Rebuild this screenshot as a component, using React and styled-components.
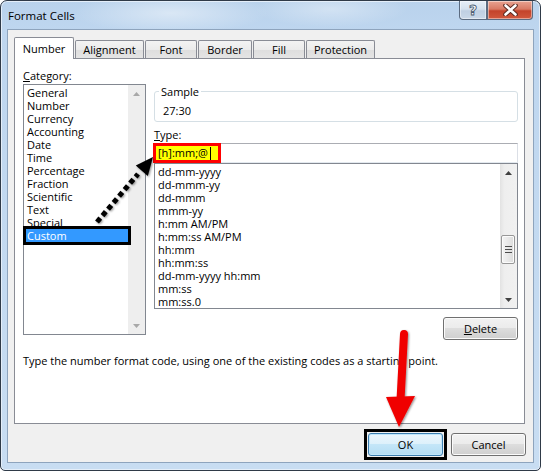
import React from 'react';
import styled, { createGlobalStyle } from 'styled-components';

const FONT = `"Open Sans", "Noto Sans", "Liberation Sans", sans-serif`;
const FS = 11;

const Global = createGlobalStyle`
  html, body { margin: 0; padding: 0; background: #fff; }
  body {
    width: 541px; height: 471px; overflow: hidden;
    font-family: ${FONT}; font-size: ${FS}px; color: #000;
  }
  * { box-sizing: border-box; }
`;

const Window = styled.div`
  position: relative;
  width: 541px;
  height: 471px;
  border: 1px solid #2f3a48;
  border-radius: 7px 7px 5px 5px;
  background:
    radial-gradient(ellipse 140px 30px at 170px 12px, rgba(255,255,255,0.45), rgba(255,255,255,0) 70%),
    radial-gradient(ellipse 110px 26px at 330px 8px, rgba(255,255,255,0.35), rgba(255,255,255,0) 70%),
    linear-gradient(180deg, #b9d2ec 0%, #bed6ef 30px, #c8ddf2 100%);
  box-shadow: inset 0 0 0 1px #e4eef9;
  padding: 0 6px 7px 6px;
  display: flex;
  flex-direction: column;
`;

const TitleBar = styled.div`
  height: 28px;
  display: flex;
  justify-content: space-between;
  align-items: flex-start;
`;

const Title = styled.div`
  padding: 7px 0 0 1px;
  line-height: 15px;
  font-size: 11.5px;
  color: #000;
`;

const Controls = styled.div`
  display: flex;
  margin-right: 1px;
`;

const CtrlButton = styled.div`
  width: ${p => p.$w}px;
  height: 19px;
  display: flex;
  align-items: center;
  justify-content: center;
  border: 1px solid #5b6b80;
  border-top: none;
  border-radius: ${p => p.$r};
  background: ${p => p.$close
    ? 'linear-gradient(180deg, #e8a392 0%, #d87a65 45%, #c4432b 55%, #d1583d 100%)'
    : 'linear-gradient(180deg, #e6eef7 0%, #d5e1ee 45%, #bfcfe2 55%, #cad8e8 100%)'};
  box-shadow: inset 0 0 0 1px rgba(255,255,255,0.45);
`;

const HelpGlyph = styled.span`
  font-family: "DejaVu Sans", sans-serif;
  font-weight: bold;
  font-size: 14px;
  line-height: 14px;
  color: #fff;
  -webkit-text-stroke: 0.9px #4c5d72;
`;

const Client = styled.div`
  flex: 1;
  background: #f0f0f0;
  border: 1px solid #8ea4bd;
  padding: 7px 8px 0 6px;
  display: flex;
  flex-direction: column;
`;

const TabStrip = styled.div`
  height: 22px;
  margin-bottom: -1px;
  display: flex;
  align-items: flex-end;
  gap: 1px;
`;

const Tab = styled.div`
  width: ${p => p.$w}px;
  height: ${p => (p.$active ? 22 : 19)}px;
  border: 1px solid #898c95;
  border-bottom: none;
  border-radius: 2px 2px 0 0;
  background: ${p => (p.$active ? '#fff' : 'linear-gradient(180deg, #f3f3f3 0%, #ebebeb 50%, #dedede 50%, #e5e5e5 100%)')};
  position: relative;
  z-index: ${p => (p.$active ? 2 : 0)};
  text-align: center;
  line-height: ${p => (p.$active ? 21 : 18)}px;
`;

const Panel = styled.div`
  position: relative;
  z-index: 1;
  background: #fff;
  border: 1px solid #898c95;
  height: 366px;
  padding: 8px 0 0 8px;
  display: flex;
  flex-direction: column;
`;

const Columns = styled.div`
  display: flex;
  gap: 8px;
`;

const Column = styled.div`
  width: ${p => p.$w}px;
  display: flex;
  flex-direction: column;
`;

const FieldLabel = styled.div`
  line-height: ${p => p.$lh}px;
  margin-top: ${p => p.$mt || 0}px;
`;

const ListBox = styled.div`
  height: ${p => p.$h}px;
  border: 1px solid #828790;
  background: #fff;
  display: flex;
`;

const ListItems = styled.div`
  flex: 1;
  padding: ${p => p.$pt}px 0 0 2px;
  overflow: ${p => (p.$clip ? 'hidden' : 'visible')};
  display: flex;
  flex-direction: column;
`;

const Item = styled.div`
  height: 13px;
  flex: 0 0 13px;
  line-height: 13px;
  padding-left: 1px;
  white-space: nowrap;
  ${p => p.$selected && `
    background: #3399ff;
    color: #fff;
    outline: 3px solid #000;
    position: relative;
    z-index: 3;
  `}
`;

const Scrollbar = styled.div`
  width: 17px;
  flex: 0 0 17px;
  display: flex;
  flex-direction: column;
  background: ${p => (p.$disabled ? '#eeeeee' : 'linear-gradient(90deg, #e2e2e2 0%, #eeeeee 25%, #f1f1f1 100%)')};
`;

const ArrowBtn = styled.div`
  height: 17px;
  flex: 0 0 17px;
  display: flex;
  align-items: center;
  justify-content: center;
`;

const Track = styled.div`
  flex: 1;
  padding-left: 1px;
`;

const Thumb = styled.div`
  margin-top: ${p => p.$offset}px;
  width: 14px;
  height: ${p => p.$size}px;
  border: 1px solid #979797;
  border-radius: 2px;
  background: linear-gradient(90deg, #f4f4f4 0%, #e8e8e8 50%, #dcdcdc 100%);
  box-shadow: inset 0 0 0 1px #fbfbfb;
  display: flex;
  flex-direction: column;
  align-items: center;
  justify-content: center;
  gap: 2px;
`;

const Grip = styled.span`
  width: 7px;
  height: 1px;
  background: #4d4d4d;
`;

const SampleGroup = styled.div`
  margin-top: 24px;
  height: 31px;
  border: 1px solid #d5dfe5;
  border-radius: 3px;
  padding-left: 4px;
  display: flex;
  flex-direction: column;
  align-items: flex-start;
`;

const Legend = styled.span`
  margin-top: -8px;
  padding: 0 2px;
  background: #fff;
  line-height: 15px;
`;

const SampleValue = styled.span`
  margin: 4px 0 0 4px;
  line-height: 15px;
`;

const TypeInput = styled.div`
  height: 20px;
  border: 1px solid;
  border-color: #abadb3 #dbdfe6 #e3e9ef #e2e3ea;
  background: #fff;
  display: flex;
  align-items: stretch;
`;

const Highlight = styled.span`
  margin: -1px 0 -1px -2px;
  border: 3px solid #ff0000;
  background: #ffff00;
  display: flex;
  align-items: center;
  padding: 0 7px 0 2px;
  line-height: 14px;
`;

const Caret = styled.span`
  display: inline-block;
  width: 1px;
  height: 13px;
  background: #000;
  margin-left: 2px;
`;

const Button = styled.button`
  width: 75px;
  height: 23px;
  padding: 0;
  font-family: ${FONT};
  font-size: ${FS}px;
  color: #000;
  border: 1px solid ${p => (p.$default ? '#3c7fb1' : '#707070')};
  border-radius: 3px;
  background: ${p => (p.$default
    ? 'linear-gradient(180deg, #ecf7fd 0%, #dcf0fb 50%, #c4e6f8 50%, #b4ddf4 100%)'
    : 'linear-gradient(180deg, #f2f2f2 0%, #ebebeb 50%, #dddddd 50%, #cfcfcf 100%)')};
  box-shadow: inset 0 0 0 1px ${p => (p.$default ? '#bfe6fb' : '#fbfbfb')};
  align-self: ${p => p.$align || 'auto'};
  margin-top: ${p => p.$mt || 0}px;
`;

const Description = styled.div`
  margin-top: 13px;
  line-height: 15px;
`;

const ButtonRow = styled.div`
  margin: 5px -1px 0 0;
  display: flex;
  justify-content: flex-end;
  align-items: center;
  gap: 4px;
`;

const FocusFrame = styled.span`
  border: 3px solid #000;
  padding: 1px;
  display: flex;
`;

const Overlay = styled.svg`
  position: absolute;
  left: -1px;
  top: -1px;
  pointer-events: none;
  z-index: 10;
`;

const Tri = ({ up, color }) => (
  <svg width="7" height="4" viewBox="0 0 7 4">
    <polygon points={up ? '0,4 7,4 3.5,0' : '0,0 7,0 3.5,4'} fill={color} />
  </svg>
);

const categories = ['General', 'Number', 'Currency', 'Accounting', 'Date', 'Time', 'Percentage', 'Fraction', 'Scientific', 'Text', 'Special', 'Custom'];
const formats = ['dd-mm-yyyy', 'dd-mmm-yy', 'dd-mmm', 'mmm-yy', 'h:mm AM/PM', 'h:mm:ss AM/PM', 'hh:mm', 'hh:mm:ss', 'dd-mm-yyyy hh:mm', 'mm:ss', 'mm:ss.0'];
const tabs = [
  { name: 'Number', w: 60, active: true },
  { name: 'Alignment', w: 69 },
  { name: 'Font', w: 52 },
  { name: 'Border', w: 54 },
  { name: 'Fill', w: 52 },
  { name: 'Protection', w: 69 },
];

export default function App() {
  return (
    <>
      <Global />
      <Window>
        <TitleBar>
          <Title>Format Cells</Title>
          <Controls>
            <CtrlButton $w={28} $r="0 0 0 4px"><HelpGlyph>?</HelpGlyph></CtrlButton>
            <CtrlButton $w={46} $r="0 0 4px 0" $close>
              <svg width="15" height="12" viewBox="0 0 15 12">
                <path d="M2.5 1.5 L12.5 10.5 M12.5 1.5 L2.5 10.5" stroke="#5a2a22" strokeWidth="4.6" strokeLinecap="round" fill="none" />
                <path d="M2.5 1.5 L12.5 10.5 M12.5 1.5 L2.5 10.5" stroke="#ffffff" strokeWidth="2.6" strokeLinecap="round" fill="none" />
              </svg>
            </CtrlButton>
          </Controls>
        </TitleBar>
        <Client>
          <TabStrip>
            {tabs.map(t => (
              <Tab key={t.name} $w={t.w} $active={t.active}>{t.name}</Tab>
            ))}
          </TabStrip>
          <Panel>
            <Columns>
              <Column $w={123}>
                <FieldLabel $lh={17}><u>C</u>ategory:</FieldLabel>
                <ListBox $h={251}>
                  <ListItems $pt={1}>
                    {categories.map(c => (
                      <Item key={c} $selected={c === 'Custom'}>{c}</Item>
                    ))}
                  </ListItems>
                  <Scrollbar $disabled>
                    <ArrowBtn><Tri up color="#a8a8a8" /></ArrowBtn>
                    <Track />
                    <ArrowBtn><Tri color="#a8a8a8" /></ArrowBtn>
                  </Scrollbar>
                </ListBox>
              </Column>
              <Column $w={364}>
                <SampleGroup>
                  <Legend>Sample</Legend>
                  <SampleValue>27:30</SampleValue>
                </SampleGroup>
                <FieldLabel $lh={16} $mt={5}><u>T</u>ype:</FieldLabel>
                <TypeInput>
                  <Highlight>[h]:mm;@<Caret /></Highlight>
                </TypeInput>
                <ListBox $h={146}>
                  <ListItems $pt={1} $clip>
                    {formats.map(f => (
                      <Item key={f}>{f}</Item>
                    ))}
                  </ListItems>
                  <Scrollbar>
                    <ArrowBtn><Tri up color="#404040" /></ArrowBtn>
                    <Track>
                      <Thumb $offset={54} $size={29}>
                        <Grip /><Grip /><Grip />
                      </Thumb>
                    </Track>
                    <ArrowBtn><Tri color="#404040" /></ArrowBtn>
                  </Scrollbar>
                </ListBox>
                <Button $align="flex-end" $mt={8}><u>D</u>elete</Button>
              </Column>
            </Columns>
            <Description>Type the number format code, using one of the existing codes as a starting point.</Description>
          </Panel>
          <ButtonRow>
            <FocusFrame><Button $default>OK</Button></FocusFrame>
            <Button>Cancel</Button>
          </ButtonRow>
        </Client>
        <Overlay width="541" height="471" viewBox="0 0 541 471">
          <defs>
            <filter id="sh" x="-20%" y="-20%" width="140%" height="140%">
              <feDropShadow dx="1" dy="1" stdDeviation="0.8" floodColor="#000" floodOpacity="0.45" />
            </filter>
          </defs>
          <g filter="url(#sh)">
            <line x1="97" y1="222" x2="138" y2="174" stroke="#000" strokeWidth="5" strokeDasharray="5 3.5" />
            <polygon points="153,157 135.8,165.5 147.8,176.1" fill="#000" />
          </g>
          <g filter="url(#sh)">
            <line x1="404" y1="334" x2="400.5" y2="400" stroke="#f00000" strokeWidth="8" strokeLinecap="round" />
            <polygon points="386,397 415,396 399,427" fill="#f00000" />
          </g>
        </Overlay>
      </Window>
    </>
  );
}
